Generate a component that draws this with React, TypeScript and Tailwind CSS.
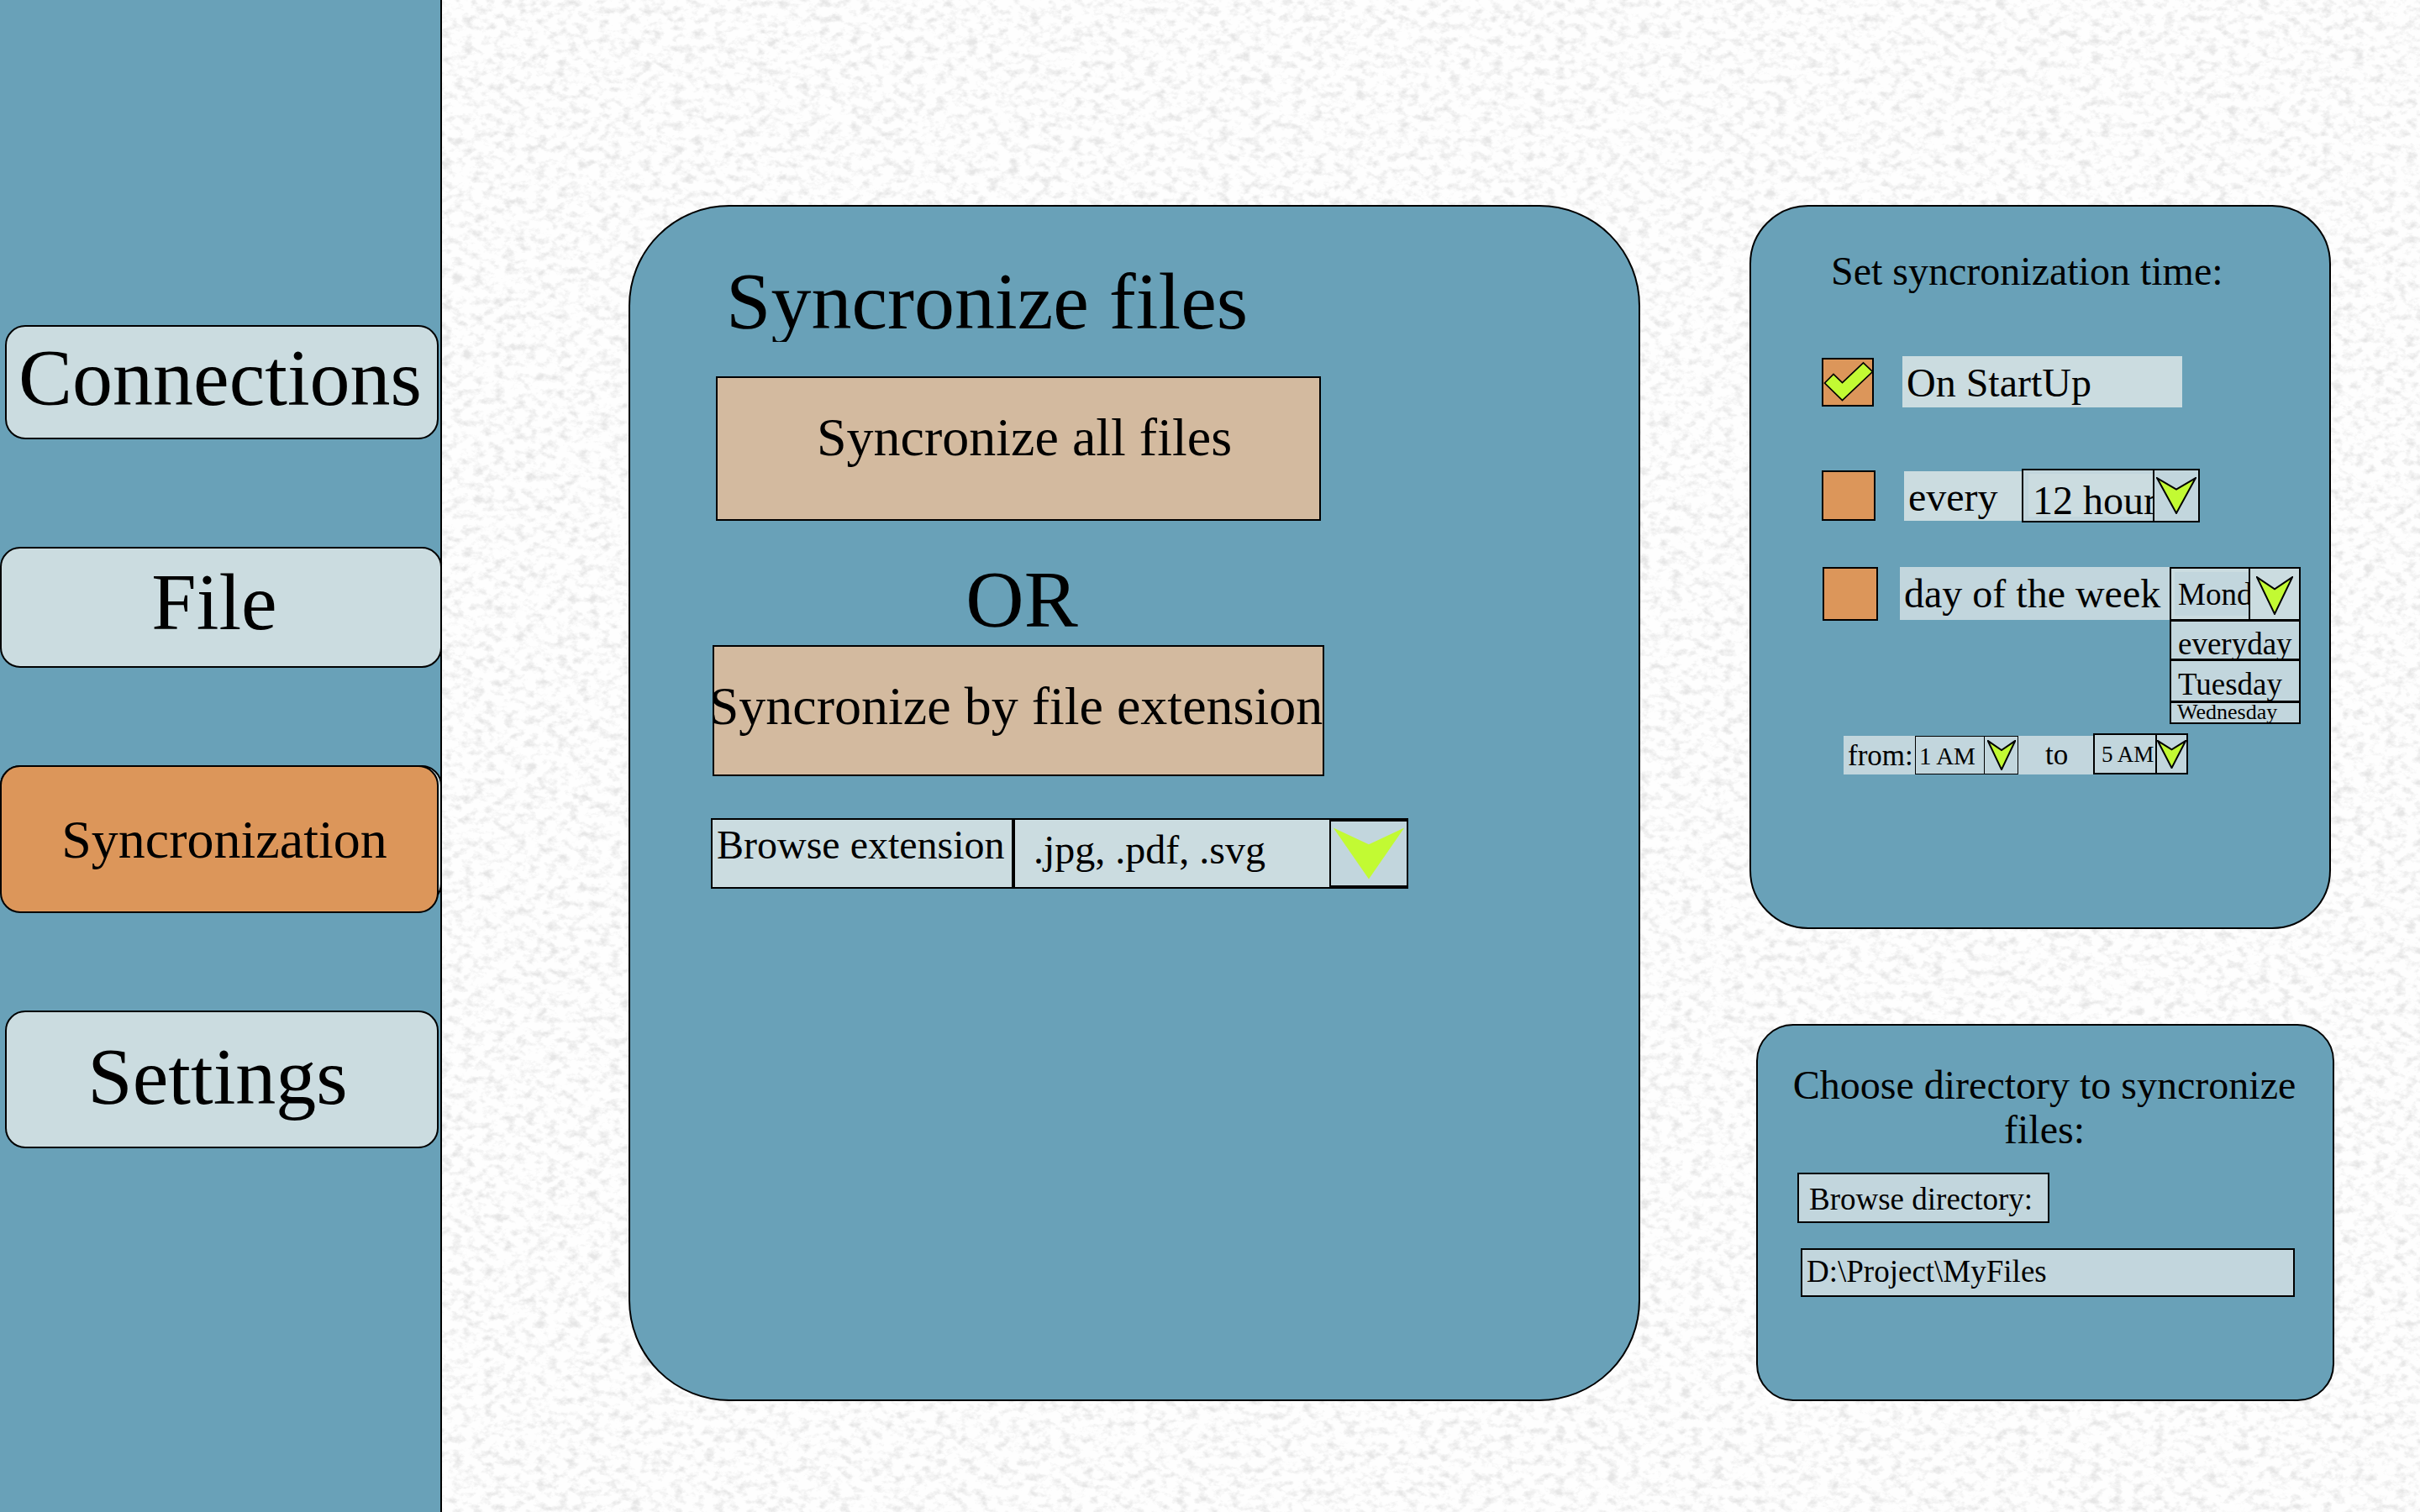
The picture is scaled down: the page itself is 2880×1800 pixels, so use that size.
import { ReactNode, useState } from "react";

function Texture() {
  return (
    <svg aria-hidden="true" className="absolute inset-0 h-full w-full">
      <filter id="paper" x="0" y="0" width="100%" height="100%" colorInterpolationFilters="sRGB">
        <feTurbulence type="fractalNoise" baseFrequency="0.08 0.11" numOctaves="4" seed="21" />
        <feColorMatrix
          type="matrix"
          values="0 0 0 0 0.9  0 0 0 0 0.9  0 0 0 0 0.9  2.8 0 0 0 -1.3"
        />
      </filter>
      <rect width="100%" height="100%" fill="#fefefe" />
      <rect width="100%" height="100%" filter="url(#paper)" />
    </svg>
  );
}

function Arrow({ className, outline = true }: { className: string; outline?: boolean }) {
  return (
    <svg aria-hidden="true" viewBox="0 0 48 42" preserveAspectRatio="none" className={className}>
      <path
        d="M1 1 L24 14 L47 1 L24 41 Z"
        fill="#c2fa33"
        stroke={outline ? "#000" : "none"}
        strokeWidth="2"
        vectorEffect="non-scaling-stroke"
      />
    </svg>
  );
}

function Tick() {
  return (
    <svg aria-hidden="true" viewBox="0 0 62 58" className="pointer-events-none absolute inset-0">
      <path
        d="M3.5 30 L14 19.5 L24.5 29.5 L49.5 6 L60.5 16.5 L24.5 50.5 Z"
        fill="#c2fa33"
        stroke="#000"
        strokeWidth="1.7"
      />
    </svg>
  );
}

function Check({
  id,
  checked,
  onChange,
  className,
}: {
  id: string;
  checked: boolean;
  onChange: (v: boolean) => void;
  className: string;
}) {
  return (
    <span className={className}>
      <input
        id={id}
        type="checkbox"
        checked={checked}
        onChange={(e) => onChange(e.target.checked)}
        className="block h-full w-full appearance-none border-2 border-black bg-[#dc965a]"
      />
      {checked && <Tick />}
    </span>
  );
}

function Picker({
  label,
  options,
  className,
  selectClass,
  arrowCell,
  arrow,
}: {
  label: string;
  options: string[];
  className: string;
  selectClass: string;
  arrowCell: string;
  arrow: ReactNode;
}) {
  return (
    <div className={className}>
      <select aria-label={label} className={selectClass}>
        {options.map((o) => (
          <option key={o}>{o}</option>
        ))}
      </select>
      <span className={arrowCell}>{arrow}</span>
    </div>
  );
}

export default function App() {
  const [startup, setStartup] = useState(true);
  const [every, setEvery] = useState(false);
  const [weekday, setWeekday] = useState(false);

  return (
    <div className="flex min-h-screen bg-white font-['Liberation_Serif',serif] text-black">
      <nav className="flex w-[526px] shrink-0 flex-col border-r-2 border-black bg-[#69a1b8] pt-[387px]">
        <button className="mr-0.5 ml-1.5 rounded-3xl border-2 border-black bg-[#cbdce0] pt-[13px] pr-1 pb-[23px] text-[96px] leading-[96px]">
          Connections
        </button>
        <button className="mt-32 -mr-0.5 rounded-3xl border-2 border-black bg-[#cbdce0] pt-4 pr-4 pb-7 text-[96px] leading-[96px]">
          File
        </button>
        <div className="relative mt-[116px] flex">
          <span className="absolute top-0 -right-0.5 left-0 h-[165px] rounded-3xl border-2 border-black bg-[#cbdce0]" />
          <button
            aria-current="page"
            className="relative mr-0.5 flex-1 rounded-3xl border-2 border-black bg-[#dc965a] pt-[55px] pb-[53px] pl-3 text-[64px] leading-[64px]"
          >
            Syncronization
          </button>
        </div>
        <button className="mt-[116px] mr-0.5 ml-1.5 rounded-3xl border-2 border-black bg-[#cbdce0] pt-[29px] pr-2.5 pb-[35px] text-[96px] leading-[96px]">
          Settings
        </button>
      </nav>

      <div className="relative flex-1">
        <Texture />
        <main className="relative flex min-h-screen gap-[130px] pt-[244px] pr-[102px] pb-[132px] pl-[222px]">
          <section className="flex-1 rounded-[120px] border-2 border-black bg-[#69a1b8] pt-[65px] pl-24">
            <h1 className="ml-[18px] h-24 overflow-hidden text-[96px] leading-[96px]">Syncronize files</h1>
            <div className="mt-[41px] ml-0.5 flex w-[728px] flex-col items-center">
              <button className="flex w-[720px] justify-center border-2 border-black bg-[#d3ba9f] pt-[39px] pb-[65px] pl-3.5 text-[64px] leading-[64px] whitespace-nowrap">
                Syncronize all files
              </button>
              <p className="mt-[46px] pl-2 text-[96px] leading-[96px]">OR</p>
              <button className="mt-1.5 flex w-full justify-center border-2 border-black bg-[#d3ba9f] pt-[39px] pr-1.5 pb-[49px] text-[64px] leading-[64px] whitespace-nowrap">
                Syncronize by file extension
              </button>
            </div>
            <div className="mt-[50px] flex h-[84px] w-[830px] border-2 border-black bg-[#cbdce0] text-5xl leading-[48px]">
              <button className="flex w-[360px] border-r-4 border-black pt-1.5 pl-[5px] whitespace-nowrap">
                Browse extension
              </button>
              <Picker
                label="File extensions"
                options={[".jpg, .pdf, .svg", ".jpg", ".pdf", ".svg"]}
                className="flex flex-1"
                selectClass="min-w-0 flex-1 appearance-none pb-2 pl-[22px] leading-[64px]"
                arrowCell="flex w-[92px] items-center justify-center border-y-2 border-l-2 border-black bg-[#c2d6dd]"
                arrow={<Arrow outline={false} className="h-16 w-[88px]" />}
              />
            </div>
          </section>

          <div className="flex w-[696px] flex-col gap-[113px]">
            <section className="mr-1 flex-1 rounded-[70px] border-2 border-black bg-[#69a1b8] pt-[53px] pl-[84px] text-5xl leading-[48px]">
              <h2 className="ml-[11px]">Set syncronization time:</h2>

              <div className="mt-[77px] flex items-center gap-[34px]">
                <Check id="startup" checked={startup} onChange={setStartup} className="relative h-[58px] w-[62px]" />
                <label htmlFor="startup" className="w-[333px] bg-[#cbdce0] pt-2 pb-[5px] pl-[5px]">
                  On StartUp
                </label>
              </div>

              <div className="mt-[73px] flex items-center gap-[34px]">
                <Check id="every" checked={every} onChange={setEvery} className="relative h-[60px] w-16" />
                <div className="flex items-center">
                  <label htmlFor="every" className="w-[140px] bg-[#cbdce0] pt-[7px] pb-1 pl-[5px]">
                    every
                  </label>
                  <Picker
                    label="Interval"
                    options={["12 hours", "24 hours"]}
                    className="flex h-16 w-[212px] border-2 border-black bg-[#c2d6dd]"
                    selectClass="mt-1 mb-[5px] ml-1.5 min-w-0 flex-1 appearance-none bg-[#cbdce0] pt-2 pl-[5px]"
                    arrowCell="flex w-[54px] items-center justify-center border-l-2 border-black"
                    arrow={<Arrow className="h-11 w-12" />}
                  />
                </div>
              </div>

              <div className="mt-[53px] ml-px flex items-center gap-[26px]">
                <Check id="weekday" checked={weekday} onChange={setWeekday} className="relative h-16 w-[66px]" />
                <div className="flex">
                  <label
                    htmlFor="weekday"
                    className="mb-px w-[321px] bg-[#c2d6dd] pt-2 pb-[7px] pl-[5px] whitespace-nowrap"
                  >
                    day of the week
                  </label>
                  <div className="relative">
                    <Picker
                      label="Day"
                      options={["Monday", "everyday", "Tuesday", "Wednesday"]}
                      className="flex h-16 w-[156px] border-2 border-black bg-[#cbdce0]"
                      selectClass="my-1 ml-1 min-w-0 flex-1 appearance-none bg-[#c2d6dd] pt-px pl-1 text-[37px] leading-[40px]"
                      arrowCell="flex w-[60px] items-center justify-center border-l-2 border-black pt-1"
                      arrow={<Arrow className="h-[46px] w-11" />}
                    />
                    <ul className="absolute top-full left-0 w-full border-x-2 border-t border-b-2 border-black bg-[#c2d6dd] text-[37px] leading-[40px]">
                      <li className="flex h-[47px] overflow-hidden border-b-[3px] border-black">
                        <button className="mt-[7px] pl-2">everyday</button>
                      </li>
                      <li className="flex h-[50px] overflow-hidden border-b-[3px] border-black">
                        <button className="mt-2 pl-2">Tuesday</button>
                      </li>
                      <li className="flex h-[23px] overflow-hidden text-[26px] leading-[21px]">
                        <button className="pb-0.5 pl-[7px]">Wednesday</button>
                      </li>
                    </ul>
                  </div>
                </div>
              </div>

              <div className="mt-[134px] ml-[26px] flex items-end text-[35px] leading-[40px]">
                <span className="h-[46px] w-[85px] bg-[#c2d6dd] pt-1 pl-[5px]">from:</span>
                <Picker
                  label="From"
                  options={["1 AM", "2 AM", "3 AM"]}
                  className="flex h-[46px] w-[123px] border border-black bg-[#c2d6dd]"
                  selectClass="min-w-0 flex-1 appearance-none pt-0.5 pl-1 text-[29px] leading-[32px]"
                  arrowCell="flex w-[40px] items-center justify-center border-l border-black"
                  arrow={<Arrow className="h-9 w-[34px]" />}
                />
                <span className="h-[46px] w-[89px] bg-[#c2d6dd] pt-[3px] pl-8">to</span>
                <Picker
                  label="To"
                  options={["5 AM", "6 AM", "7 AM"]}
                  className="flex h-[49px] w-[113px] border-2 border-black bg-[#c2d6dd]"
                  selectClass="min-w-0 flex-1 appearance-none pl-2 text-[27px] leading-[32px]"
                  arrowCell="flex w-[37px] items-center justify-center border-l-2 border-black"
                  arrow={<Arrow className="h-[34px] w-9" />}
                />
              </div>
            </section>

            <section className="ml-2 rounded-[44px] border-2 border-black bg-[#69a1b8] pt-11 pb-[122px] text-[37px] leading-[40px]">
              <h2 className="pr-0.5 text-center text-5xl leading-[53px]">Choose directory to syncronize files:</h2>
              <button className="mt-[25px] ml-[47px] block border-2 border-black bg-[#c2d6dd] pt-2.5 pr-[18px] pb-1.5 pl-3">
                Browse directory:
              </button>
              <div className="mt-[30px] mr-[45px] ml-[51px] flex">
                <input
                  aria-label="Directory"
                  defaultValue="D:\Project\MyFiles"
                  className="h-[58px] w-full border-2 border-black bg-[#c2d6dd] pb-[3px] pl-[5px]"
                />
              </div>
            </section>
          </div>
        </main>
      </div>
    </div>
  );
}
